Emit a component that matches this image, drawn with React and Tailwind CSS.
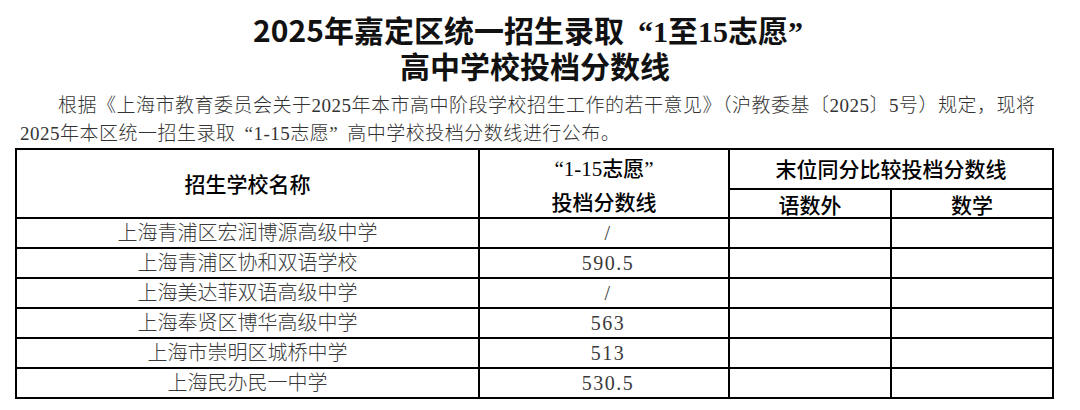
import React from 'react';

function App() {
  const rows = [
    { name: '上海青浦区宏润博源高级中学', score: '/' },
    { name: '上海青浦区协和双语学校', score: '590.5' },
    { name: '上海美达菲双语高级中学', score: '/' },
    { name: '上海奉贤区博华高级中学', score: '563' },
    { name: '上海市崇明区城桥中学', score: '513' },
    { name: '上海民办民一中学', score: '530.5' },
  ];

  const sans = 'font-["Noto_Sans_CJK_SC",sans-serif]';
  const serif = 'font-["Liberation_Serif","Noto_Sans_CJK_SC",serif]';

  return (
    <div className="w-[1080px] h-[410px] bg-white overflow-hidden">
      <div className={`pt-[11px] text-center text-[30px] leading-[36px] font-semibold text-[#111] pr-[10px] ${sans}`}>
        <div className="h-[36px]">
          2025年嘉定区统一招生录取<span className={`pl-[14px] ${serif}`}>“1</span>至<span className={serif}>15</span>志愿<span className={`pr-[14px] ${serif}`}>”</span>
        </div>
        <div className="h-[36px]">高中学校投档分数线</div>
      </div>

      <div className={`mt-[9px] px-[20px] text-[19px] leading-[28px] tracking-[0.5px] text-[#333] font-light whitespace-nowrap ${serif}`}>
        <div className="indent-[38px] h-[28px]">
          根据《上海市教育委员会关于2025年本市高中阶段学校招生工作的若干意见》（沪教委基〔2025〕5号）规定，现将
        </div>
        <div className="h-[28px]">
          2025年本区统一招生录取<span className="pl-[9px]">“1-15</span>志愿<span className="pr-[9px]">”</span>高中学校投档分数线进行公布。
        </div>
      </div>

      <table className="ml-[15px] w-[1037px] table-fixed border-collapse border-2 border-black">
        <colgroup>
          <col className="w-[463px]" />
          <col className="w-[250px]" />
          <col className="w-[162px]" />
          <col className="w-[162px]" />
        </colgroup>
        <thead className={`text-[21px] text-black font-medium ${sans}`}>
          <tr className="h-[40px]">
            <th rowSpan={2} className="border-2 border-black font-medium">招生学校名称</th>
            <th rowSpan={2} className="border-2 border-black font-medium leading-[32px]">
              <div>
                <span className={`pl-[10px] ${serif}`}>“1-15</span>志愿<span className={`pr-[10px] ${serif}`}>”</span>
              </div>
              <div>投档分数线</div>
            </th>
            <th colSpan={2} className="border-2 border-black font-medium">末位同分比较投档分数线</th>
          </tr>
          <tr className="h-[29px]">
            <th className="border-2 border-black font-medium leading-[26px]">语数外</th>
            <th className="border-2 border-black font-medium leading-[26px]">数学</th>
          </tr>
        </thead>
        <tbody className={`text-[20px] leading-[26px] text-[#3a3a3a] font-light ${serif}`}>
          {rows.map((r, i) => (
            <tr key={i} className="h-[30px]">
              <td className="border-2 border-black text-center">{r.name}</td>
              <td className="border-2 border-black text-center tracking-[1.5px] pl-[8px]">{r.score}</td>
              <td className="border-2 border-black"></td>
              <td className="border-2 border-black"></td>
            </tr>
          ))}
        </tbody>
      </table>
    </div>
  );
}

export default App;
